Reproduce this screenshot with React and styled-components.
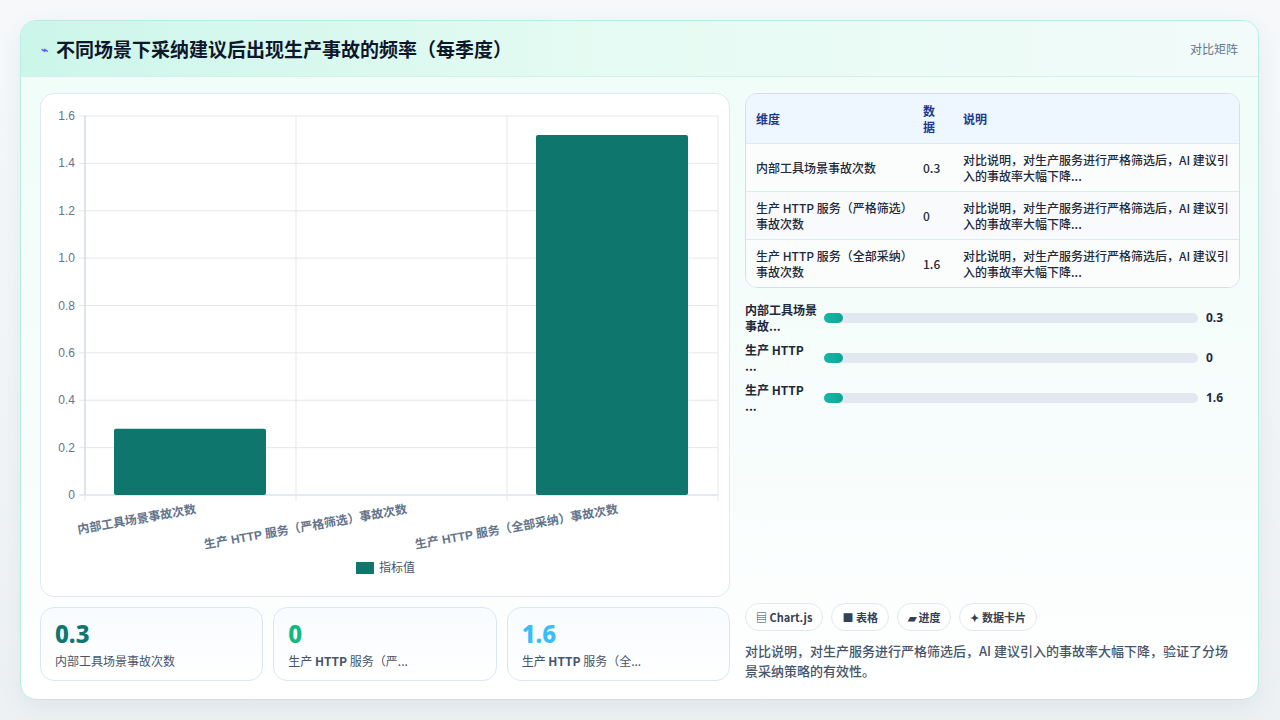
import React from 'react'
import styled, { createGlobalStyle } from 'styled-components'

const Global = createGlobalStyle`
  html, body { margin: 0; padding: 0; background: #f4f6f8; }
  body { font-family: "Noto Sans CJK SC", "Noto Sans", sans-serif; color: #1e293b; }
`

const Page = styled.div`
  width: 1280px; height: 720px; box-sizing: border-box;
  padding: 20px 21px 20px 20px;
  background: linear-gradient(180deg, #f6f8fa 0%, #eef1f4 100%);
`

const Card = styled.div`
  height: 680px; box-sizing: border-box;
  border: 1px solid #b9ece0; border-radius: 16px; overflow: hidden;
  background: linear-gradient(180deg, #effdf8 0%, #f7fdfc 60%, #ffffff 100%);
  box-shadow: 0 8px 24px rgba(15, 118, 110, 0.08);
  display: flex; flex-direction: column;
`

const Header = styled.div`
  height: 56px; flex: none; box-sizing: border-box;
  display: flex; align-items: center; justify-content: space-between;
  padding: 0 20px;
  background: linear-gradient(90deg, #ccf6ea 0%, #e6fbf3 50%, #f2fbfa 100%);
  border-bottom: 1px solid #d4f0e8;
`

const Title = styled.h1`
  margin: 0; font-size: 19px; font-weight: 700; color: #0f172a;
  display: flex; align-items: center; gap: 8px;
`

const Tag = styled.span`font-size: 12px; color: #64748b;`

const Body = styled.div`
  flex: 1; display: grid; grid-template-columns: 690px 495px; gap: 15px;
  padding: 16px 19px 18px 19px;
`

const Left = styled.div`display: flex; flex-direction: column; gap: 10px;`
const Right = styled.div`display: flex; flex-direction: column;`

const ChartPanel = styled.div`
  height: 504px; box-sizing: border-box; background: #fff;
  border: 1px solid #e2e8f0; border-radius: 14px;
`

const Stats = styled.div`display: grid; grid-template-columns: repeat(3, 1fr); gap: 10px;`
const Stat = styled.div`
  height: 74px; box-sizing: border-box; padding: 12px 14px;
  border: 1px solid #dbe6f3; border-radius: 14px;
  background: linear-gradient(180deg, #f8fbff, #ffffff);
`
const StatValue = styled.div`
  font-family: "Noto Sans", sans-serif; font-size: 24px; font-weight: 800; line-height: 28px;
  color: ${p => p.$c};
`
const StatLabel = styled.div`font-size: 12px; color: #475569; margin-top: 4px;`

const Table = styled.div`
  border: 1px solid #d5dee9; border-radius: 12px; overflow: hidden; background: #fff;
`
const Row = styled.div`
  display: grid; grid-template-columns: 167px 40px 1fr; align-items: center;
  min-height: 48px; box-sizing: border-box; padding: 0 10px;
  font-size: 12px; line-height: 16px; color: #1e293b;
  background: ${p => (p.$head ? '#eef6ff' : p.$alt ? '#f8fafc' : '#fbfdfd')};
  border-top: ${p => (p.$head ? 'none' : '1px solid #e2e8f0')};
  font-weight: ${p => (p.$head ? 700 : 500)};
  ${p => p.$head && 'color: #1e3a8a; min-height: 49px;'}
  & > span:nth-child(2) { padding-right: 6px; }
`

const Bars = styled.div`display: flex; flex-direction: column; gap: 4px; margin-top: 12px;`
const BarRow = styled.div`
  display: grid; grid-template-columns: 79px 1fr 34px; align-items: center; gap: 0;
  height: 36px; font-size: 12px; font-weight: 700; line-height: 16px;
`
const Track = styled.div`
  height: 10px; border-radius: 5px; background: #e2e8f0; margin-right: 8px; position: relative;
`
const Fill = styled.div`
  height: 10px; width: 19px; border-radius: 5px;
  background: linear-gradient(90deg, #14b8a6, #0fa596);
`
const BarVal = styled.span`font-family: "Noto Sans", sans-serif; font-size: 12px;`

const Spacer = styled.div`flex: 1;`
const Chips = styled.div`display: flex; gap: 8px;`
const Chip = styled.span`
  height: 28px; box-sizing: border-box; padding: 0 10px;
  display: inline-flex; align-items: center; gap: 4px;
  border: 1px solid #e2e8f0; border-radius: 14px; background: #fff;
  font-size: 11px; font-weight: 700; color: #334155;
`
const Desc = styled.p`
  margin: 10px 0 0; font-size: 13px; line-height: 20px; color: #475569; font-weight: 500;
`

const cats = ['内部工具场景事故次数', '生产 HTTP 服务（严格筛选）事故次数', '生产 HTTP 服务（全部采纳）事故次数']
const vals = [0.28, 0, 1.52]

function Chart() {
  const x0 = 44, x1 = 677, y0 = 401, y1 = 22
  const h = y0 - y1
  const cw = (x1 - x0) / 3
  const ticks = [0, 0.2, 0.4, 0.6, 0.8, 1.0, 1.2, 1.4, 1.6]
  return (
    <svg width="690" height="504" style={{ display: 'block' }} fontFamily="Liberation Sans, Noto Sans CJK SC, sans-serif">
      {ticks.map(t => {
        const y = y0 - (t / 1.6) * h
        return (
          <g key={t}>
            <line x1={x0 - 6} x2={x1} y1={y} y2={y} stroke={t === 0 ? '#cbd5e1' : '#e5e7eb'} />
            <text x={x0 - 10} y={y + 4} fontSize="12" fill="#64748b" textAnchor="end">
              {t === 0 ? '0' : t.toFixed(1)}
            </text>
          </g>
        )
      })}
      {[0, 1, 2, 3].map(i => (
        <line key={i} x1={x0 + i * cw} x2={x0 + i * cw} y1={y1} y2={y0 + 6} stroke="#e5e7eb" />
      ))}
      <line x1={x0} x2={x0} y1={y1} y2={y0} stroke="#cbd5e1" />
      {vals.map((v, i) => {
        const bh = (v / 1.6) * h
        return <rect key={i} x={x0 + i * cw + 29} y={y0 - bh} width={152} height={bh} rx="2" fill="#0f766e" />
      })}
      {cats.map((c, i) => (
        <text key={c} x={x0 + i * cw + cw / 2 + 6} y={y0 + 18} fontSize="12" fontWeight="600" fill="#64748b"
          textAnchor="end" transform={`rotate(-10 ${x0 + i * cw + cw / 2 + 6} ${y0 + 18})`}>
          {c}
        </text>
      ))}
      <rect x="315" y="468" width="18" height="12" fill="#0f766e" />
      <text x="338" y="478" fontSize="12" fill="#475569">指标值</text>
    </svg>
  )
}

export default function App() {
  const rows = [
    ['内部工具场景事故次数', '0.3'],
    ['生产 HTTP 服务（严格筛选）事故次数', '0'],
    ['生产 HTTP 服务（全部采纳）事故次数', '1.6'],
  ]
  const note = '对比说明，对生产服务进行严格筛选后，AI 建议引入的事故率大幅下降...'
  return (
    <>
      <Global />
      <Page>
        <Card>
          <Header>
            <Title><span style={{ color: '#6366f1', fontSize: 12 }}>⌁</span>不同场景下采纳建议后出现生产事故的频率（每季度）</Title>
            <Tag>对比矩阵</Tag>
          </Header>
          <Body>
            <Left>
              <ChartPanel><Chart /></ChartPanel>
              <Stats>
                <Stat><StatValue $c="#0f766e">0.3</StatValue><StatLabel>内部工具场景事故次数</StatLabel></Stat>
                <Stat><StatValue $c="#10b981">0</StatValue><StatLabel>生产 <b>HTTP</b> 服务（严...</StatLabel></Stat>
                <Stat><StatValue $c="#38bdf8">1.6</StatValue><StatLabel>生产 <b>HTTP</b> 服务（全...</StatLabel></Stat>
              </Stats>
            </Left>
            <Right>
              <Table>
                <Row $head><span>维度</span><span>数<br />据</span><span>说明</span></Row>
                {rows.map(([a, b], i) => (
                  <Row key={a} $alt={i === 1}><span>{a}</span><span>{b}</span><span>{note}</span></Row>
                ))}
              </Table>
              <Bars>
                <BarRow><span>内部工具场景<br />事故...</span><Track><Fill /></Track><BarVal>0.3</BarVal></BarRow>
                <BarRow><span>生产 HTTP<br />...</span><Track><Fill /></Track><BarVal>0</BarVal></BarRow>
                <BarRow><span>生产 HTTP<br />...</span><Track><Fill /></Track><BarVal>1.6</BarVal></BarRow>
              </Bars>
              <Spacer />
              <Chips>
                <Chip>▤ Chart.js</Chip>
                <Chip>■ 表格</Chip>
                <Chip>▰ 进度</Chip>
                <Chip>✦ 数据卡片</Chip>
              </Chips>
              <Desc>对比说明，对生产服务进行严格筛选后，AI 建议引入的事故率大幅下降，验证了分场景采纳策略的有效性。</Desc>
            </Right>
          </Body>
        </Card>
      </Page>
    </>
  )
}
